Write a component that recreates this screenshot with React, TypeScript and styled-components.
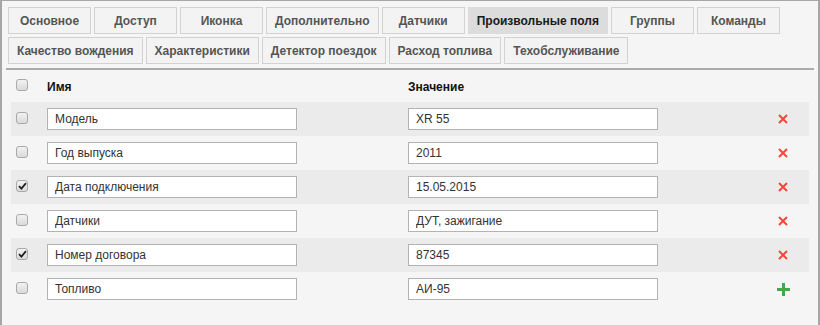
import React from 'react';
import styled, { createGlobalStyle } from 'styled-components';

const GlobalStyle = createGlobalStyle`
  html, body {
    margin: 0;
    padding: 0;
    background: #ffffff;
  }
  body {
    font-family: "Liberation Sans", Arial, sans-serif;
  }
`

const Panel = styled.div`
  box-sizing: border-box;
  width: 820px;
  height: 325px;
  background: #f5f5f5;
  border: 2px solid #a6a6a6;
  border-top-width: 1px;
  border-bottom: none;
  padding: 6px 6px 0 6px;
`

const TabRow = styled.div`
  display: flex;
  gap: 3px;
  margin-bottom: 3px;
`

interface TabProps {
  active?: boolean;
}

const Tab = styled.div<TabProps>`
  box-sizing: border-box;
  height: 27px;
  min-width: 83px;
  padding: 0 8px;
  display: flex;
  align-items: center;
  justify-content: center;
  font-size: 12px;
  font-weight: bold;
  color: ${props => (props.active ? '#1a1a1a' : '#555555')};
  background: ${props => (props.active ? '#dcdcdc' : '#f3f3f3')};
  border: 1px solid ${props => (props.active ? '#dcdcdc' : '#d2d2d2')};
  white-space: nowrap;
`

const Separator = styled.div`
  height: 2px;
  background: #ababab;
  margin: 4px -2px 0 -2px;
`

const Table = styled.div`
  padding: 0 3px;
`

interface RowProps {
  striped?: boolean;
}

const Row = styled.div<RowProps>`
  display: grid;
  grid-template-columns: 36px 361px 1fr 52px;
  align-items: center;
  height: 34px;
  background: ${props => (props.striped ? '#ebebeb' : 'transparent')};
`

const HeaderRow = styled(Row)`
  height: 32px;
`

const HeaderCell = styled.div`
  font-size: 12px;
  font-weight: bold;
  color: #111111;
  padding-top: 2px;
`

const CheckCell = styled.div`
  display: flex;
  padding-left: 5px;
  margin-top: -2px;
`

interface BoxProps {
  checked?: boolean;
}

const CheckBox = styled.span<BoxProps>`
  box-sizing: border-box;
  width: 12px;
  height: 12px;
  border: 1px solid #a9a9a9;
  border-radius: 3px;
  background: linear-gradient(#f2f2f2, #dadada);
  display: flex;
  align-items: center;
  justify-content: center;
`

const Field = styled.input`
  box-sizing: border-box;
  width: 250px;
  height: 22px;
  border: 1px solid #b3b3b3;
  background: #ffffff;
  padding: 0 7px;
  font-family: "Liberation Sans", Arial, sans-serif;
  font-size: 12px;
  color: #333333;
  outline: none;
`

const ActionCell = styled.div`
  display: flex;
  justify-content: center;
`

const Check: React.FC<BoxProps> = ({ checked }) => (
  <CheckBox checked={checked}>
    {checked && (
      <svg width="9" height="8" viewBox="0 0 9 8">
        <path d="M1 4.2 L3.4 6.6 L8 1.2" stroke="#222" strokeWidth="1.8" fill="none" />
      </svg>
    )}
  </CheckBox>
)

const RemoveIcon = () => (
  <svg width="10" height="10" viewBox="0 0 10 10">
    <path d="M1 1 L9 9 M9 1 L1 9" stroke="#f2473a" strokeWidth="2" />
  </svg>
)

const AddIcon = () => (
  <svg width="13" height="13" viewBox="0 0 13 13">
    <path d="M6.5 0 V13 M0 6.5 H13" stroke="#43a84a" strokeWidth="3" />
  </svg>
)

const tabsTop = ['Основное', 'Доступ', 'Иконка', 'Дополнительно', 'Датчики', 'Произвольные поля', 'Группы', 'Команды'];
const tabsBottom = ['Качество вождения', 'Характеристики', 'Детектор поездок', 'Расход топлива', 'Техобслуживание'];
const activeTab = 'Произвольные поля';

const fields = [
  { name: 'Модель', value: 'XR 55', checked: false },
  { name: 'Год выпуска', value: '2011', checked: false },
  { name: 'Дата подключения', value: '15.05.2015', checked: true },
  { name: 'Датчики', value: 'ДУТ, зажигание', checked: false },
  { name: 'Номер договора', value: '87345', checked: true },
];

export default function App() {
  return (
    <>
      <GlobalStyle />
      <Panel>
        <TabRow>
          {tabsTop.map(t => (
            <Tab key={t} active={t === activeTab}>{t}</Tab>
          ))}
        </TabRow>
        <TabRow>
          {tabsBottom.map(t => (
            <Tab key={t} active={t === activeTab}>{t}</Tab>
          ))}
        </TabRow>
        <Separator />
        <Table>
          <HeaderRow>
            <CheckCell><Check /></CheckCell>
            <HeaderCell>Имя</HeaderCell>
            <HeaderCell>Значение</HeaderCell>
            <div />
          </HeaderRow>
          {fields.map((f, i) => (
            <Row key={f.name} striped={i % 2 === 0}>
              <CheckCell><Check checked={f.checked} /></CheckCell>
              <div><Field defaultValue={f.name} /></div>
              <div><Field defaultValue={f.value} /></div>
              <ActionCell><RemoveIcon /></ActionCell>
            </Row>
          ))}
          <Row>
            <CheckCell><Check /></CheckCell>
            <div><Field defaultValue="Топливо" /></div>
            <div><Field defaultValue="АИ-95" /></div>
            <ActionCell><AddIcon /></ActionCell>
          </Row>
        </Table>
      </Panel>
    </>
  );
}
